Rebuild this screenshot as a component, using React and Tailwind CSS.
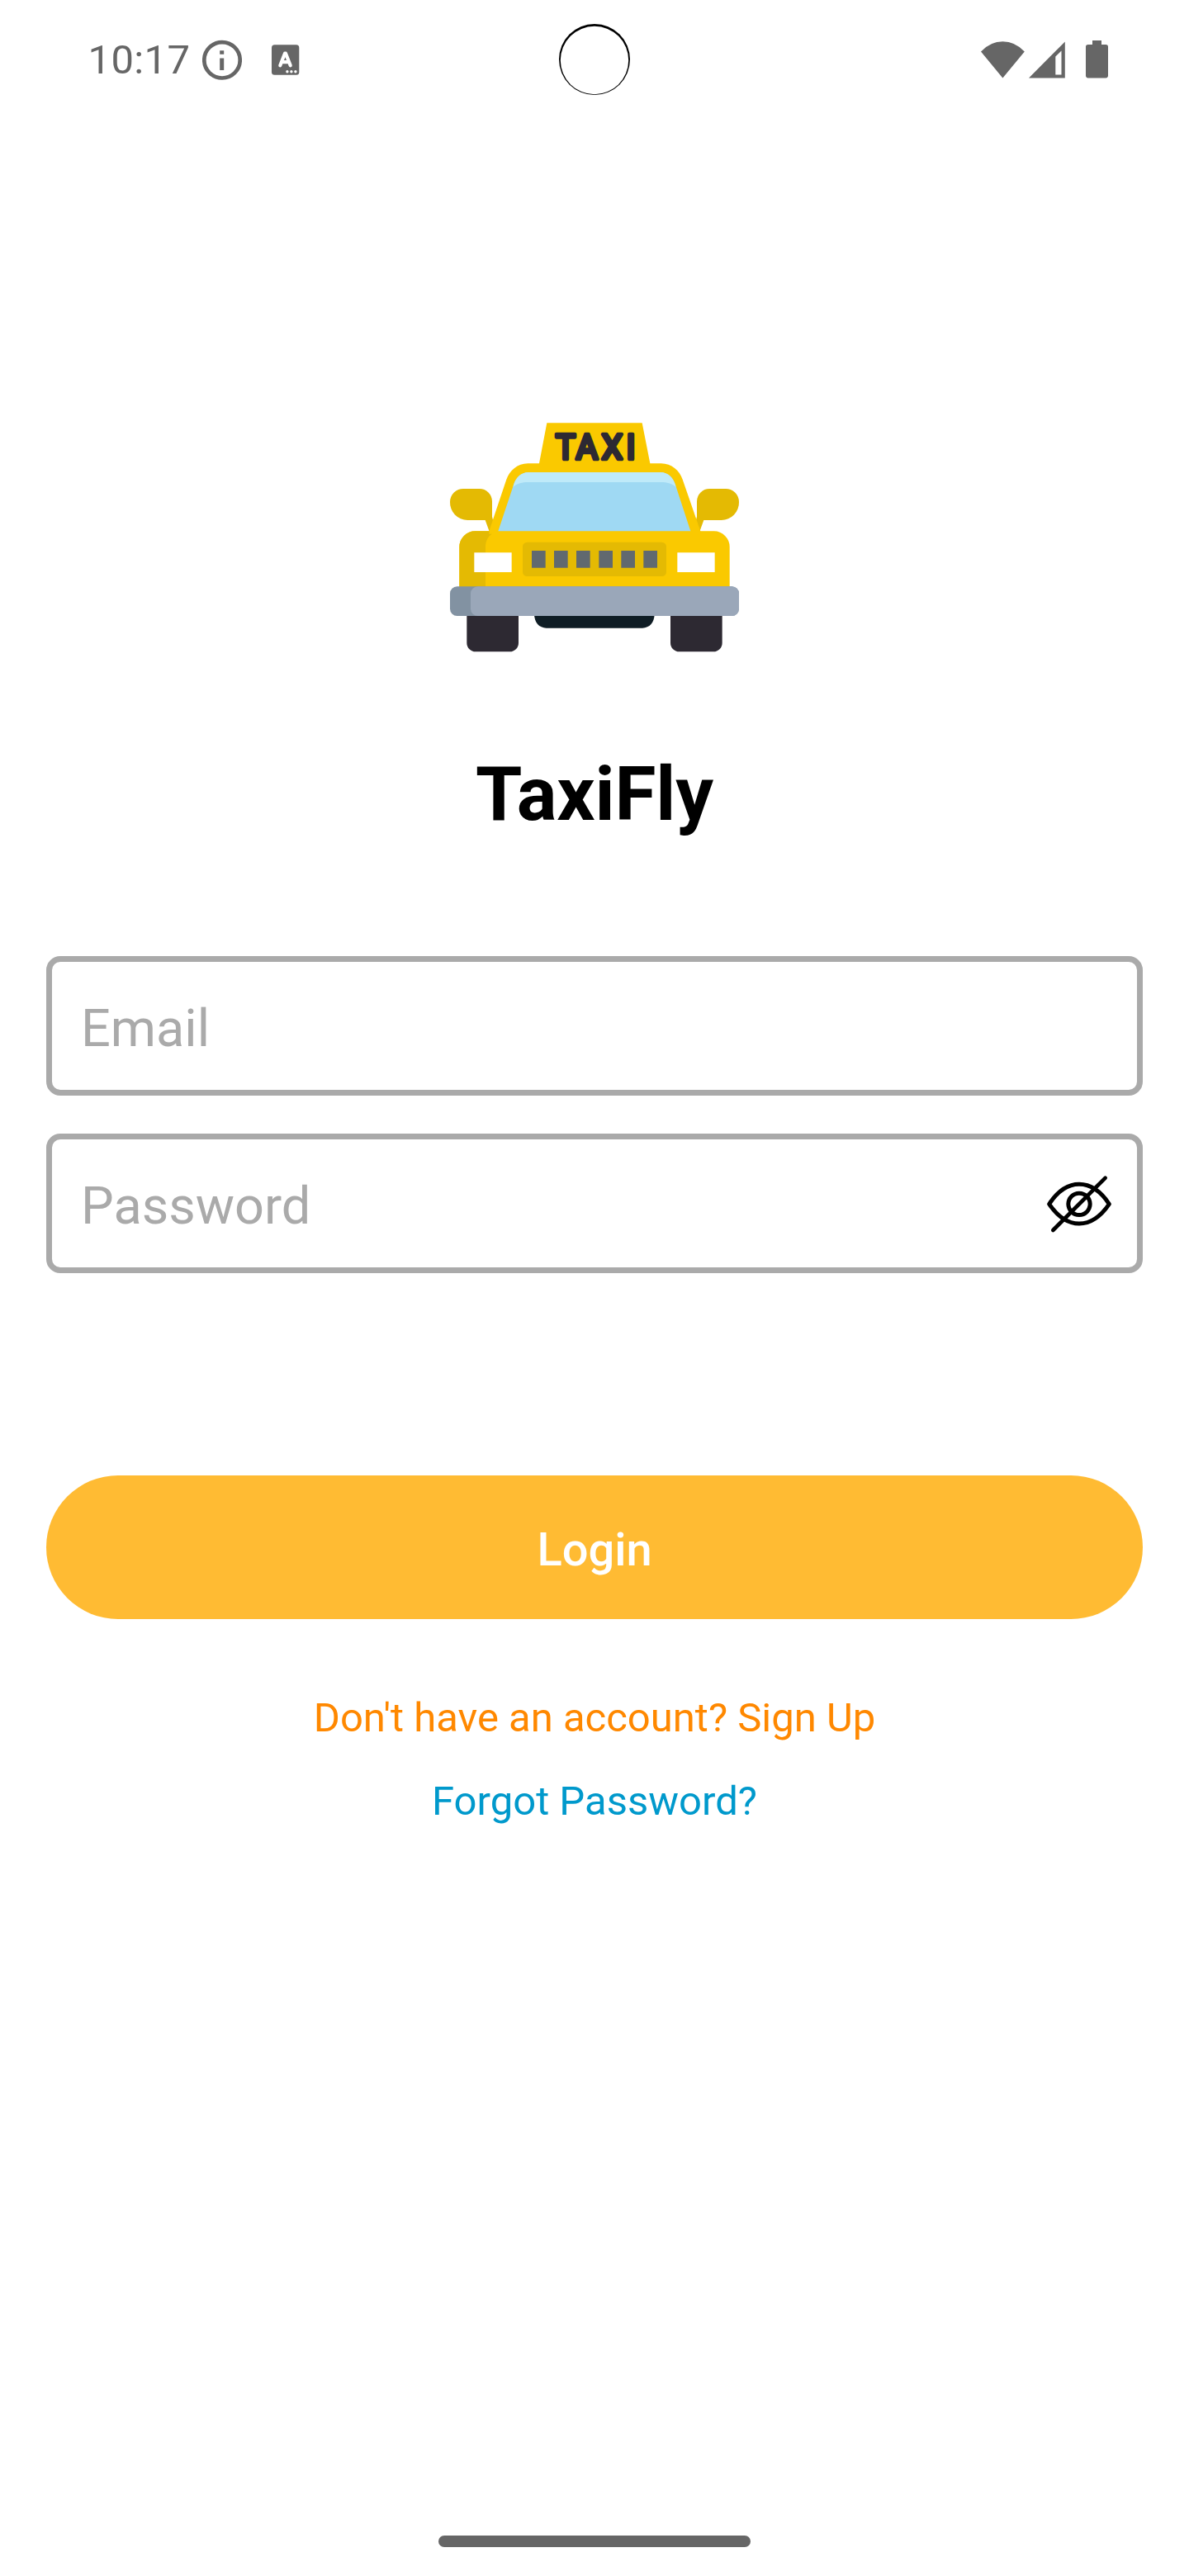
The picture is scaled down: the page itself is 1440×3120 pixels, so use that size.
function StatusBar() {
  return (
    <header className="relative flex h-[144px] w-full items-center justify-between pl-[106.5px] pr-[98px] text-[#666666]">
      <div className="flex items-center">
        <span className="w-[138.5px] whitespace-nowrap text-[49px] leading-[57px] tracking-[0.35px]">10:17</span>
        <svg className="h-[50px] w-[48px]" viewBox="0 0 48 50" fill="none">
          <circle cx="24" cy="25.8" r="21.7" stroke="currentColor" strokeWidth="4.7" />
          <path d="M21.2 14.2h5v4.6h-5zM21.2 23.4h5v14.6h-5z" fill="currentColor" />
        </svg>
        <svg className="ml-[35.7px] h-[38px] w-[34px]" viewBox="0 0 34 38">
          <rect x="0" y="1.3" width="33.3" height="36.4" rx="3.5" fill="currentColor" />
          <g fill="none" stroke="#fff" strokeLinecap="round" strokeLinejoin="round">
            <path d="M10.3 26.3L16 11.7h1L22.7 26.3M12.5 22.2h8" strokeWidth="4.2" />
          </g>
          <g fill="#fff">
            <circle cx="18.9" cy="33.7" r="1.7" />
            <circle cx="23.9" cy="33.7" r="1.7" />
            <circle cx="28.9" cy="33.7" r="1.7" />
          </g>
        </svg>
      </div>
      <svg className="absolute left-[676px] top-[28px] h-[88px] w-[88px]" viewBox="676 28 88 88">
        <circle cx="720" cy="72" r="43" fill="#000" />
        <circle cx="720" cy="73" r="41.2" fill="#fff" />
      </svg>
      <svg className="h-[48px] w-[154px]" viewBox="1188 48 154 48" fill="currentColor">
        <path d="M1188 62.4Q1199.5 50.2 1214.4 50.2T1240.8 62.4L1214.4 94.4Z" />
        <path fillRule="evenodd" d="M1246 94.4L1289.8 50.4V94.4ZM1278.3 68.4V90.6H1285.5V61.4Z" />
        <path d="M1323 49h11v5h5.2a2.8 2.8 0 0 1 2.8 2.8v34.8a2.8 2.8 0 0 1-2.8 2.8h-21.4a2.8 2.8 0 0 1-2.8-2.8V56.8a2.8 2.8 0 0 1 2.8-2.8h5.2z" />
      </svg>
    </header>
  );
}

function TaxiLogo() {
  return (
    <svg className="h-[300px] w-[380px]" viewBox="0 0 1140 900">
      <path d="M94 276h58a46 46 0 0 1 46 46v55l10 40-20 14-15-41h-64a64 64 0 0 1-64-66a48 48 0 0 1 49-48z" fill="#e4ba03" />
      <path d="M1046 276h-58a46 46 0 0 0-46 46v55l-10 40 20 14 15-41h64a64 64 0 0 0 64-66a48 48 0 0 0-49-48z" fill="#e4ba03" />
      <path d="M397 37H743L772 184H812C850 184 879 210 890 242L955 430H1004A57 57 0 0 1 1061 487V640H79V487A57 57 0 0 1 136 430H187L250 242C262 210 290 184 328 184H369Z" fill="#fac900" />
      <path d="M79 640V487A57 57 0 0 1 136 430H187V440H197C184 448 174 465 174 487V640Z" fill="#e4ba03" />
      <path d="M220 430L276 262C283 235 304 216 330 216H810C836 216 857 235 864 262L919 430Z" fill="#9fd9f3" />
      <path d="M274 269C283 235 304 216 330 216H810C836 216 857 235 866 269C850 257 833 252 810 252H330C307 252 290 257 274 269Z" fill="#bfeaf9" />
      <g transform="scale(0.94 1)" fill="#2d2932" stroke="#2d2932" strokeWidth="14" strokeLinejoin="round" fontFamily="Roboto, sans-serif" fontWeight="400" fontSize="130" textAnchor="middle">
        <text y="169" x="494 577 674.500 747">TAXI</text>
      </g>
      <rect x="309" y="470" width="522" height="124" rx="16" fill="#e4ba03" />
      <path d="M342 501h50v62h-50zM423 501h50v62h-50zM504 501h50v62h-50zM586 501h50v62h-50zM667 501h50v62h-50zM748 501h50v62h-50z" fill="#61696f" />
      <path d="M133 508H269V579H133zM871 508H1007V579H871z" fill="#fff" />
      <path d="M106 730H294V836a32 32 0 0 1-32 32H138a32 32 0 0 1-32-32zM846 730H1034V836a32 32 0 0 1-32 32H878a32 32 0 0 1-32-32z" fill="#2d2932" />
      <path d="M351 730H788C788 762 770 782 744 782H395C369 782 351 762 351 730Z" fill="#0f1d25" />
      <rect x="45" y="631" width="1050" height="107" rx="26" fill="#8292a2" />
      <path d="M146 631H1069A26 26 0 0 1 1095 657V712A26 26 0 0 1 1069 738H146A26 26 0 0 1 120 712V657A26 26 0 0 1 146 631Z" fill="#9aa7b9" />
    </svg>
  );
}

function HiddenEyeIcon() {
  return (
    <svg className="h-[80px] w-[93.333px]" viewBox="60 170 280 240" fill="none" stroke="#000" strokeWidth="15" strokeLinecap="round" strokeLinejoin="round">
      <path d="M92 291C125 241 161 219 201 219S277 241 310 291C277 339 241 362 201 362S125 339 92 291Z" />
      <circle cx="201" cy="291" r="39.5" />
      <path d="M296 196L106 386" strokeWidth="14" />
    </svg>
  );
}

function Field({ label, children }) {
  return (
    <div className="flex h-[169px] w-full items-center justify-between rounded-[17px] border-[7px] border-[#aaaaaa] pl-[35px] pr-[23.667px]">
      <span className="pt-[6px] text-[63px] leading-[74px] text-[#aaaaaa]">{label}</span>
      {children}
    </div>
  );
}

export default function App() {
  return (
    <div className="flex h-[3120px] w-[1440px] flex-col items-center overflow-hidden bg-white font-[Roboto,sans-serif]">
      <StatusBar />
      <main className="flex w-full flex-1 flex-col items-center px-14 pt-[356px]">
        <TaxiLogo />
        <h1 className="mt-[109px] text-[91px] font-bold leading-[107px] tracking-[-0.1px] text-black">TaxiFly</h1>
        <form className="mt-[142px] flex w-full flex-col">
          <div className="flex flex-col gap-[46px]">
            <Field label="Email" />
            <Field label="Password">
              <HiddenEyeIcon />
            </Field>
          </div>
          <button type="button" className="mt-[245px] h-[174px] w-full rounded-full bg-[#ffbb33] pt-[5px] text-[56px] font-medium leading-[66px] text-white">
            Login
          </button>
        </form>
        <a className="mt-[91px] text-[49px] leading-[57px] text-[#ff8800]">Don't have an account? Sign Up</a>
        <a className="mt-[44px] text-[49px] leading-[57px] text-[#0099cc]">Forgot Password?</a>
      </main>
      <div className="mb-[35px] h-[14px] w-[378px] rounded-full bg-[#666666]" />
    </div>
  );
}
